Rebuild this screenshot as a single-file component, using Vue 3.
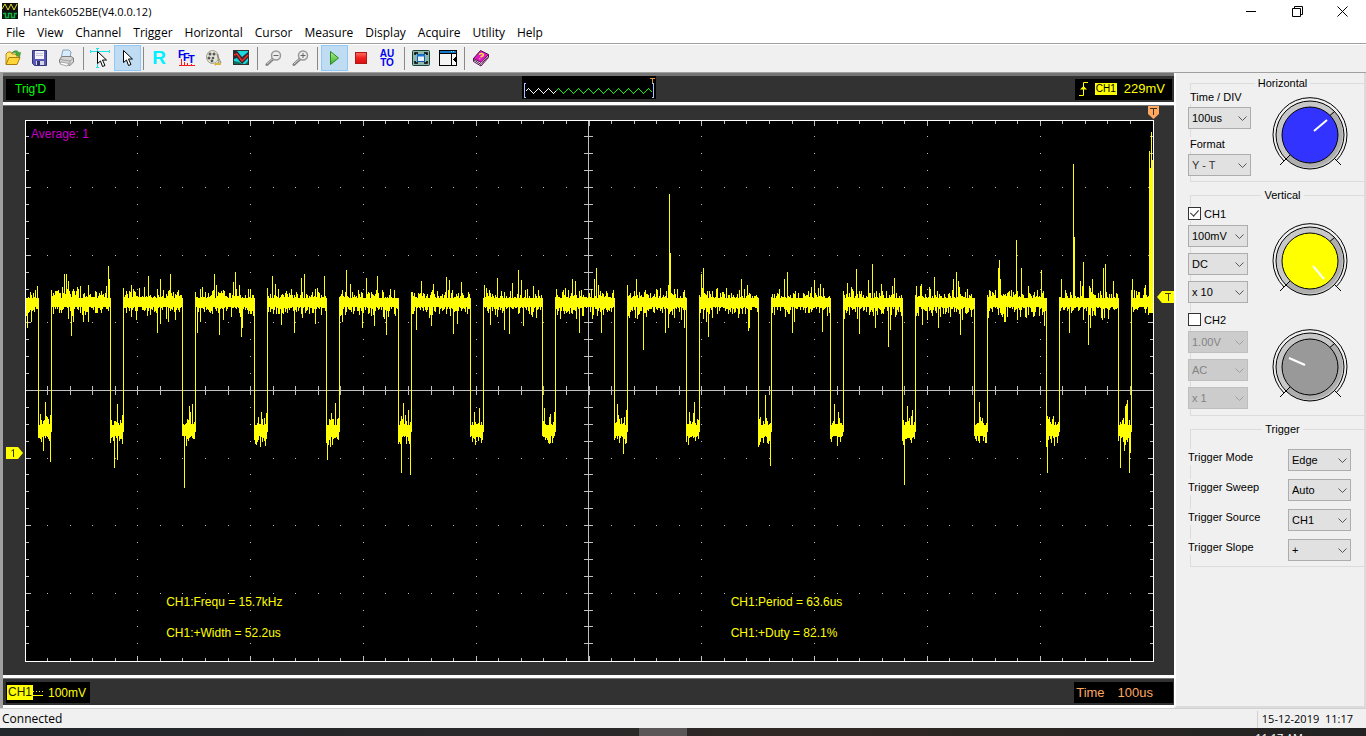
<script setup>
import { ref } from 'vue'

const menus = ['File', 'View', 'Channel', 'Trigger', 'Horizontal', 'Cursor', 'Measure', 'Display', 'Acquire', 'Utility', 'Help']

const readings = ['CH1:Frequ = 15.7kHz', 'CH1:Period = 63.6us', 'CH1:+Width = 52.2us', 'CH1:+Duty = 82.1%']

const channels = ref([
  { name: 'CH1', on: true, settings: ['100mV', 'DC', 'x 10'], labels: ['Volts', 'Coupling', 'Probe'], color: '#ffff00', hand: 'M41 41L52 54' },
  { name: 'CH2', on: false, settings: ['1.00V', 'AC', 'x 1'], labels: ['Volts', 'Coupling', 'Probe'], color: '#999999', hand: 'M17 27L33 34' }
])

const triggers = [
  ['Trigger Mode', 'Edge'],
  ['Trigger Sweep', 'Auto'],
  ['Trigger Source', 'CH1'],
  ['Trigger Slope', '+']
]

const W = 1129
const H = 542

function buildGrid() {
  let dots = ''
  let ticks = ''
  for (let i = 1; i < 50; i++) {
    const x = Math.floor(i * 22.56)
    const len = i % 5 === 0 ? 5 : 3
    ticks += `M${x + 0.5} 1v${len}M${x + 0.5} ${H - 1}v${-len}M${x + 0.5} 266v9`
    for (let r = 1; r < 8; r++) {
      if (r !== 4) dots += `M${x} ${Math.floor(r * 67.6) + 0.5}h1`
    }
  }
  for (let j = 1; j < 32; j++) {
    const y = Math.floor(j * 16.9)
    const len = j % 4 === 0 ? 5 : 3
    ticks += `M1 ${y + 0.5}h${len}M${W - 1} ${y + 0.5}h${-len}M559 ${y + 0.5}h9`
    for (let c = 1; c < 10; c++) {
      if (c !== 5) dots += `M${Math.floor(c * 112.8)} ${y + 0.5}h1`
    }
  }
  return { dots, ticks }
}

const peaksUp = {
  64: 274, 66: 274, 68: 281, 88: 285, 108: 266, 109: 279, 131: 285, 148: 276, 160: 279, 170: 274, 178: 290,
  214: 274, 216: 285, 233: 282, 235: 272, 239: 285, 272: 276, 275: 284, 301: 278, 304: 274, 324: 276, 346: 270,
  350: 284, 366: 278, 377: 276, 403: 403, 421: 281, 433: 284, 446: 277, 449: 280, 461: 282, 484: 285, 497: 278,
  512: 283, 518: 270, 521: 280, 533: 286, 556: 289, 572: 279, 575: 281, 594: 279, 596: 268, 598: 285, 613: 291,
  627: 285, 636: 279, 660: 288, 668: 285, 669: 194, 670: 253, 684: 290, 701: 274, 702: 288, 703: 268, 741: 279,
  747: 285, 784: 279, 787: 272, 814: 280, 820: 284, 847: 283, 856: 269, 868: 280, 872: 264, 881: 284, 894: 278,
  921: 284, 934: 277, 953: 279, 956: 272, 958: 281, 998: 268, 999: 260, 1000: 279, 1016: 240, 1021: 268,
  1041: 270, 1061: 279, 1073: 164, 1074: 237, 1080: 281, 1083: 262, 1092: 279, 1103: 268, 1105: 264, 1113: 281,
  1132: 279, 1145: 285, 1149: 151, 1150: 168, 1151: 132, 1152: 160,
  40: 414, 45: 402, 46: 417, 117: 404, 189: 406, 190: 412, 192: 404, 261: 412, 331: 413, 335: 403, 408: 410,
  474: 412, 479: 408, 544: 408, 550: 414, 554: 412, 617: 404, 626: 410, 689: 412, 694: 402, 760: 417, 765: 395,
  834: 404, 838: 412, 907: 406, 912: 410, 979: 402, 1049: 417, 1125: 406, 1126: 404, 1127: 400
}

const peaksDown = {
  27: 328, 31: 322, 71: 336, 73: 322, 83: 322, 88: 322, 136: 320, 157: 333, 160: 324, 166: 319, 168: 322, 175: 320,
  197: 333, 200: 322, 219: 335, 241: 337, 242: 328, 281: 325, 294: 333, 315: 324, 342: 322, 362: 328, 374: 326,
  386: 335, 416: 330, 431: 326, 453: 334, 457: 324, 490: 325, 504: 330, 509: 334, 523: 326, 560: 319, 579: 333,
  592: 319, 601: 333, 637: 319, 643: 350, 665: 333, 668: 328, 681: 320, 684: 328, 706: 322, 708: 337, 748: 331,
  749: 328, 792: 333, 794: 322, 822: 332, 859: 334, 875: 328, 888: 347, 890: 330, 922: 325, 938: 328, 960: 335,
  962: 320, 1004: 322, 1005: 322, 1017: 320, 1044: 326, 1069: 333, 1088: 345, 1090: 328, 1102: 320,
  43: 451, 50: 462, 114: 468, 117: 460, 184: 488, 256: 445, 265: 442, 327: 460, 401: 473, 410: 475, 481: 443,
  552: 443, 623: 454, 688: 445, 758: 447, 770: 466, 837: 446, 904: 485, 979: 443, 1046: 447, 1047: 473,
  1120: 468, 1124: 451, 1129: 473, 1130: 453, 1131: 477
}

function buildTrace() {
  let seed = 6052
  const rnd = () => {
    seed = (seed * 16807) % 2147483647
    return seed / 2147483647
  }
  let d = ''
  for (let x = 26; x < 1153; x++) {
    const phase = (x - 38 + 72) % 72
    const low = phase < 13 && x < 1140
    const a = Math.floor(rnd() * rnd() * 14)
    const b = Math.floor(rnd() * rnd() * 14)
    let top = low ? 425 - a : 298 - a
    let bottom = low ? 436 + b : 307 + b
    if (peaksUp[x]) top = Math.min(top, peaksUp[x])
    if (peaksDown[x]) bottom = Math.max(bottom, peaksDown[x])
    if (phase === 0) top = 298
    if (phase === 13) bottom = 432
    if (x >= 1149) bottom = 313
    d += `M${x - 25 + 0.5} ${top - 120}V${bottom - 120}`
  }
  return d
}

function buildPreview(from, to) {
  let d = ''
  for (let x = from; x <= to; x++) {
    const t = (x + 4) % 10
    const y = t < 5 ? 12 + t : 22 - t
    d += `${d ? 'L' : 'M'}${x + 0.5} ${y + 0.5}`
  }
  return d
}

const grid = buildGrid()
const trace = buildTrace()
const previewHead = buildPreview(3, 33)
const previewTail = buildPreview(33, 130)
</script>

<template>
  <div class="window">
    <header class="titlebar">
      <svg class="logo" width="16" height="16" viewBox="0 0 16 16">
        <rect width="16" height="16" fill="#101010" />
        <path d="M0 6L3 1L6 7L9 1L12 7L15 1" fill="none" stroke="#e8e020" />
        <path d="M1 10.500H3.500V14.500H6.500V10.500H9.500V14.500H12.500V10.500H15" fill="none" stroke="#10b040" stroke-width="1.500" />
      </svg>
      <h1>Hantek6052BE(V4.0.0.12)</h1>
      <div class="controls">
        <button aria-label="Minimize"><svg width="11" height="11"><path d="M0 5.500H10" /></svg></button>
        <button aria-label="Restore"><svg width="11" height="11"><path d="M.5 2.500H8.500V10.500H.5ZM2.500 2.500V.5H10.500V8.500H8.500" /></svg></button>
        <button aria-label="Close"><svg width="11" height="11"><path d="M.5 .5L10.500 10.500M10.500 .5L.5 10.500" /></svg></button>
      </div>
    </header>

    <nav class="menubar">
      <button v-for="m in menus" :key="m">{{ m }}</button>
    </nav>

    <div class="toolbar">
      <button aria-label="Open">
        <svg width="18" height="18" viewBox="0 0 18 18">
          <path d="M2 15V5L4 3H7L8 5H13V8" fill="#ffe36a" stroke="#b98a10" />
          <path d="M2 15.500L5 8.500H16L13 15.500Z" fill="#ffd63a" stroke="#a87a08" />
          <path d="M8 4C10 1 14 1 15 4L16.500 3.500L15.500 8L11.500 5.500L13 5C12 3 10 3 8 4Z" fill="#48b038" stroke="#28781c" stroke-width=".6" />
        </svg>
      </button>
      <button aria-label="Save">
        <svg width="18" height="18" viewBox="0 0 18 18">
          <path d="M1.500 1.500H15.500V16.500H3.500L1.500 14.500Z" fill="#5a5ab4" stroke="#34347c" />
          <rect x="4" y="2" width="9" height="8" fill="#f4f4fa" />
          <path d="M5 4.500H12M5 6.500H12" stroke="#c4c4d8" />
          <rect x="5" y="12" width="8" height="4" fill="#d8d8e4" />
          <rect x="6" y="12" width="3" height="4" fill="#34347c" />
        </svg>
      </button>
      <button aria-label="Print">
        <svg width="18" height="18" viewBox="0 0 18 18">
          <path d="M3 9L5 1H11L13 3L12 9Z" fill="#d8ecff" stroke="#88a0b8" />
          <path d="M1.500 10.500L4 7.500H13L15.500 9V13L12 16.500L1.500 13.500Z" fill="#d4d4d4" stroke="#808080" />
          <path d="M2 10.500L12 12L15 9.500M12 12V16" fill="none" stroke="#a0a0a0" />
          <path d="M3 13L11 14.500L9 17L2 15Z" fill="#fff" stroke="#888" stroke-width=".7" />
        </svg>
      </button>
      <i class="sep"></i>
      <button aria-label="Measure cursor">
        <svg width="20" height="20" viewBox="0 0 20 20">
          <path d="M.5 2V5M19.500 2V5M1 3.500H19M7.500 0V19M6 .5H9M6 19.500H9" fill="none" stroke="#20e0e8" />
          <path d="M7.500 3.500V15.500L10.500 13L12.500 18.500L15 17.500L12.500 12H16.500Z" fill="#fff" stroke="#000" />
        </svg>
      </button>
      <button class="active" aria-label="Pointer">
        <svg width="18" height="18" viewBox="0 0 18 18">
          <path d="M5.500 1.500V13.500L8.500 11L10.500 16.500L13 15.500L10.500 10H14.500Z" fill="#fff" stroke="#000" />
        </svg>
      </button>
      <i class="sep"></i>
      <button class="letter-r">R</button>
      <button aria-label="FFT">
        <svg class="fft" width="18" height="18" viewBox="0 0 18 18">
          <path d="M1 16.500H17M3.500 10V17M6.500 13V17M9.500 14V17M13.500 15V17" stroke="#ff1818" />
          <text x="0" y="9">F</text><text x="5" y="12">F</text><text x="10" y="14">T</text>
        </svg>
      </button>
      <button aria-label="Record">
        <svg width="18" height="18" viewBox="0 0 18 18">
          <ellipse cx="7.500" cy="8" rx="6" ry="6.500" fill="#e4e4d8" stroke="#a0a090" />
          <g fill="#585858"><circle cx="5" cy="5" r="1.500" /><circle cx="9" cy="5" r="1.500" /><circle cx="4" cy="9" r="1.500" /><circle cx="8" cy="9" r="1.300" /><circle cx="7" cy="12" r="1.400" /></g>
          <path d="M12 5L16 14L10 16L14 13Z" fill="#ddd5a0" stroke="#909080" />
          <path d="M10 14H16V16H9Z" fill="#d8b840" />
        </svg>
      </button>
      <button aria-label="Pass fail">
        <svg width="18" height="18" viewBox="0 0 18 18">
          <rect x="1.500" y="1.500" width="15" height="14" fill="#18d8e0" stroke="#303030" />
          <path d="M2 2L5 2L10 8L16 3V9L10 15L5 9L2 10Z" fill="#302830" />
          <path d="M2 6L5 5L10 12L16 6" fill="none" stroke="#f02828" stroke-width="1.500" />
          <path d="M2 15V12L7 13L10 15ZM16 15V12L13 15Z" fill="#107058" />
        </svg>
      </button>
      <i class="sep"></i>
      <button aria-label="Zoom out">
        <svg width="18" height="18" viewBox="0 0 18 18">
          <path d="M2 15.500L8 10" stroke="#808080" stroke-width="3" stroke-linecap="round" /><path d="M2 15L8 9.500" stroke="#d0d0d0" />
          <circle cx="11" cy="6.500" r="4.500" fill="#ececec" stroke="#989898" stroke-width="1.500" /><path d="M8.500 6.500H13.500" stroke="#666" />
        </svg>
      </button>
      <button aria-label="Zoom in">
        <svg width="18" height="18" viewBox="0 0 18 18">
          <path d="M2 15.500L8 10" stroke="#808080" stroke-width="3" stroke-linecap="round" /><path d="M2 15L8 9.500" stroke="#d0d0d0" />
          <circle cx="11" cy="6.500" r="4.500" fill="#ececec" stroke="#989898" stroke-width="1.500" /><path d="M8.500 6.500H13.500M11 4V9" stroke="#666" />
        </svg>
      </button>
      <i class="sep"></i>
      <button class="active" aria-label="Run">
        <svg width="18" height="18" viewBox="0 0 18 18">
          <defs><linearGradient id="run" x2="0" y2="1"><stop stop-color="#b0f090" /><stop offset="1" stop-color="#38b028" /></linearGradient></defs>
          <path d="M5.500 2.500V15.500L13.500 9Z" fill="url(#run)" stroke="#288820" />
        </svg>
      </button>
      <button aria-label="Stop">
        <svg width="18" height="18" viewBox="0 0 18 18">
          <defs><linearGradient id="halt" x2="0" y2="1"><stop stop-color="#ff7060" /><stop offset=".5" stop-color="#f02020" /><stop offset="1" stop-color="#d81010" /></linearGradient></defs>
          <rect x="3.500" y="3.500" width="11" height="11" fill="url(#halt)" stroke="#b01818" />
        </svg>
      </button>
      <button class="auto"><span>AU</span><span>TO</span></button>
      <i class="sep"></i>
      <button aria-label="Full screen">
        <svg width="18" height="18" viewBox="0 0 18 18">
          <rect x=".5" y="1.500" width="17" height="15" rx="1" fill="#8fb8ac" stroke="#184038" />
          <path d="M3 6V4H6M12 4H15V6M15 12V14H12M6 14H3V12" fill="none" stroke="#000" stroke-width="1.500" />
          <rect x="5.500" y="5.500" width="7" height="7" fill="#e8f4ff" stroke="#1858a8" /><path d="M5 6.500H13" stroke="#1878d8" stroke-width="2" />
        </svg>
      </button>
      <button aria-label="Side panel">
        <svg width="18" height="18" viewBox="0 0 18 18" shape-rendering="crispEdges">
          <rect x=".5" y="1.500" width="17" height="15" fill="#f4f4f4" stroke="#000" />
          <path d="M1 3H17" stroke="#1878c8" stroke-width="2" /><path d="M12 2.500H16" stroke="#80e0ff" stroke-dasharray="1 1" />
          <path d="M0 4.500H18M12.500 5V16" stroke="#000" /><path d="M17 7V14L14 10.500Z" fill="#000" />
        </svg>
      </button>
      <i class="sep"></i>
      <button aria-label="Help book">
        <svg width="18" height="18" viewBox="0 0 18 18">
          <path d="M1.500 9V12.500L9 17L16.500 8.500V5.500" fill="#fff" stroke="#501048" />
          <path d="M1.500 9.500L8.500 1.500L16.500 5.500L9 13.500Z" fill="#e018c8" stroke="#501048" />
          <path d="M2 11L9 15.500L16 7.500" fill="none" stroke="#501048" />
          <path d="M7 5.500C10 3.500 13 5.500 10.500 7L8.500 8M7.500 9.500L8 10" fill="none" stroke="#ffe040" stroke-width="1.500" />
        </svg>
      </button>
    </div>

    <main class="work">
      <section class="scope">
        <div class="strip">
          <span class="box trigd">Trig'D</span>
          <svg class="preview" width="134" height="23" viewBox="0 0 134 23">
            <rect width="134" height="23" fill="#000" />
            <g fill="none" shape-rendering="crispEdges">
              <path :d="previewHead" stroke="#fff" /><path :d="previewTail" stroke="#00ff00" />
              <path d="M4 7.500H2.500V21.500H4M130 7.500H131.500V21.500H130" stroke="#a8c0ff" />
              <path d="M128 2.500H133M130.500 2V7" stroke="#e09040" />
            </g>
          </svg>
          <span class="box level">
            <svg width="9" height="14" viewBox="0 0 9 14"><path d="M0 13.500H4.500V.5H9" fill="none" stroke="#ff0" /><path d="M1 7.500L4.500 4L8 7.500Z" fill="#ff0" /></svg>
            <b>CH1</b><span>229mV</span>
          </span>
        </div>

        <div class="stage">
          <div class="plot">
            <svg class="screen" viewBox="0 0 1129 542" preserveAspectRatio="none" shape-rendering="crispEdges">
              <rect x=".5" y=".5" width="1128" height="541" fill="#000" stroke="#fff" />
              <path d="M1 270.500H1128M563.500 1V541" stroke="#c0c0c0" />
              <path :d="grid.ticks" stroke="#c0c0c0" />
              <path :d="grid.dots" stroke="#c0c0c0" />
              <path :d="trace" stroke="#ffff00" />
            </svg>
            <span class="average">Average: 1</span>
            <div class="readings"><span v-for="r in readings" :key="r">{{ r }}</span></div>
            <svg class="mark mark-time" width="11" height="13" viewBox="0 0 11 13"><path d="M0 0H11V8L5.500 13L0 8Z" fill="#ffa860" /><path d="M2 2.500H9M5.500 2V9" stroke="#403020" /></svg>
            <svg class="mark mark-level" width="17" height="12" viewBox="0 0 17 12"><path d="M17 0H5L0 6L5 12H17Z" fill="#ff0" /><path d="M8 2.500H14M11.500 2V10" stroke="#403c00" /></svg>
            <svg class="mark mark-zero" width="17" height="12" viewBox="0 0 17 12"><path d="M0 0H12L17 6L12 12H0Z" fill="#ff0" /><path d="M5.500 4L7.500 2.500V10" fill="none" stroke="#303000" /></svg>
          </div>
        </div>

        <div class="strip">
          <span class="box volts"><b>CH1</b>
            <svg width="10" height="6" viewBox="0 0 10 6" shape-rendering="crispEdges"><path d="M0 1.500H10" stroke="#ff0" stroke-dasharray="1 2" /><path d="M0 5.500H10" stroke="#ff0" /></svg>
            <span>100mV</span>
          </span>
          <span class="box time"><span>Time</span><span>100us</span></span>
        </div>
      </section>

      <aside class="panel">
        <fieldset>
          <legend>Horizontal</legend>
          <div class="body split middle">
            <div class="stack base">
              <label for="timediv">Time / DIV</label>
              <div class="pick"><select id="timediv"><option>100us</option></select><svg width="9" height="6"><path d="M.5 .5L4.500 4.500L8.500 .5" /></svg></div>
              <label for="format" class="second">Format</label>
              <div class="pick"><select id="format" class="soft"><option>Y - T</option></select><svg width="9" height="6"><path d="M.5 .5L4.500 4.500L8.500 .5" /></svg></div>
            </div>
            <svg class="knob" width="76" height="72" viewBox="0 0 76 72">
              <circle cx="38" cy="36" r="34" fill="#c8c8c8" />
              <path d="M62 12A34 34 0 0 1 14 60Z" fill="#aeaeae" />
              <g fill="none" stroke="#000">
                <path d="M12 62A37 37 0 1 1 64 62" /><circle cx="38" cy="36" r="34" />
                <path d="M56 18L62 13M20 54L8 66M62 59L69 66" />
              </g>
              <circle cx="38" cy="36" r="28" fill="#3333ff" stroke="#000" />
              <path d="M42 32L55 21" stroke="#fff" stroke-width="2" />
            </svg>
          </div>
        </fieldset>

        <fieldset>
          <legend>Vertical</legend>
          <div class="body channels">
            <div v-for="c in channels" :key="c.name" class="channel">
              <label class="tick"><input v-model="c.on" type="checkbox" />{{ c.name }}</label>
              <div class="split">
                <div class="stack">
                  <div v-for="(s, i) in c.settings" :key="s" class="pick narrow">
                    <select :disabled="!c.on" :aria-label="c.name + ' ' + c.labels[i]"><option>{{ s }}</option></select>
                    <svg width="9" height="6"><path d="M.5 .5L4.500 4.500L8.500 .5" /></svg>
                  </div>
                </div>
                <svg class="knob" width="76" height="72" viewBox="0 0 76 72">
                  <circle cx="38" cy="36" r="34" fill="#c8c8c8" />
                  <path d="M62 12A34 34 0 0 1 14 60Z" fill="#aeaeae" />
                  <g fill="none" stroke="#000">
                    <path d="M12 62A37 37 0 1 1 64 62" /><circle cx="38" cy="36" r="34" />
                    <path d="M56 18L62 13M20 54L8 66M62 59L69 66" />
                  </g>
                  <circle cx="38" cy="36" r="28" :fill="c.color" stroke="#000" />
                  <path :d="c.hand" stroke="#fff" stroke-width="2" />
                </svg>
              </div>
            </div>
          </div>
        </fieldset>

        <fieldset>
          <legend>Trigger</legend>
          <div class="body triggers">
            <div v-for="([name, value], i) in triggers" :key="name" class="row">
              <label :for="'trigger' + i">{{ name }}</label>
              <div class="pick"><select :id="'trigger' + i"><option>{{ value }}</option></select><svg width="9" height="6"><path d="M.5 .5L4.500 4.500L8.500 .5" /></svg></div>
            </div>
          </div>
        </fieldset>
      </aside>
    </main>

    <footer class="status"><span>Connected</span><time>15-12-2019&nbsp; 11:17</time></footer>
    <div class="taskbar"><i></i><span>11:17 AM</span></div>
  </div>
</template>

<style>
html, body { margin: 0; }
</style>

<style scoped>
.window {
  display: flex;
  flex-direction: column;
  height: 100vh;
  min-height: 700px;
  overflow: hidden;
  background: #f0f0f0;
  color: #000;
  font: 12px/16px "Open Sans", "Noto Sans", sans-serif;
}
*, *::before { box-sizing: border-box; }
button { padding: 0; border: 0; background: none; font: inherit; color: inherit; }
svg { display: block; flex: none; }

.titlebar { display: flex; align-items: center; height: 22px; flex: none; padding-left: 2px; background: #fff; }
h1 { margin: 0 auto 0 5px; padding-top: 2px; font-size: 11px; font-weight: 400; }
.controls { display: flex; }
.controls button { display: grid; place-items: center; width: 46px; height: 21px; }
.controls button:last-child { padding-right: 2px; }
.controls path { fill: none; stroke: #000; }
.menubar { display: flex; gap: 12px; height: 21px; flex: none; padding-left: 6px; background: #fff; }

.toolbar { display: flex; flex: none; height: 29px; padding-bottom: 1px; border-top: 1px solid #a0a0a0; background: #f0f0f0; box-shadow: inset 0 1px #fff; }
.toolbar button { display: grid; place-items: center; width: 27px; height: 26px; margin-top: 1px; padding-right: 1px; }
.toolbar .active { border: 1px solid #90c8f6; background: #c0dcf3; }
.sep { width: 6px; height: 23px; margin-top: 3px; background: linear-gradient(#888, #888) 2px 0 / 1px 100% no-repeat; }
.toolbar .letter-r { padding-right: 3px; color: #00f0ff; font: bold 19px/22px "Liberation Sans", Arial, sans-serif; }
.toolbar .auto { align-content: center; padding-right: 3px; color: #0000f0; font: bold 10px/9px "Liberation Sans", Arial, sans-serif; }
.fft text { fill: #0000f0; font: bold 11px "Liberation Sans", Arial, sans-serif; }

.work { display: flex; flex: 1; min-height: 0; border-top: 1px solid #a0a0a0; box-shadow: inset 0 1px #696969; }
.scope {
  display: flex;
  flex-direction: column;
  flex: 1;
  min-width: 0;
  border-left: 3px solid #a0a0a0;
  font: 12px/16px "Liberation Sans", Arial, sans-serif;
}
.strip {
  position: relative;
  display: flex;
  justify-content: space-between;
  align-items: center;
  flex: none;
  height: 32px;
  padding: 0 2px 0 3px;
  border-top: 3px solid #747474;
  border-bottom: 3px solid #fff;
  background: #323232;
}
.strip:last-child { height: 30px; padding-top: 1px; border-top-width: 1px; }
.box { display: flex; align-items: center; height: 21px; background: #000; }
.trigd { padding: 0 9px; color: #00ff00; }
.preview { position: absolute; left: 519px; top: 0; }
.level { gap: 7px; padding: 0 7px 0 4px; color: #ff0; font-size: 13px; }
.level b { padding: 0 1px; background: #ff0; color: #000; font: 10px/12px "Liberation Sans", Arial, sans-serif; }
.volts { padding: 0 4px 0 1px; color: #ff0; }
.volts b { padding: 0 1px; background: #ff0; color: #202000; font: 12px/15px "Liberation Sans", Arial, sans-serif; }
.volts svg { margin-right: 5px; }
.time { gap: 13px; padding: 0 20px 0 2px; color: #ffa860; font-size: 13px; }
.strip .time { margin-right: -1px; }

.stage { display: flex; flex: 1; min-height: 0; padding: 14px 20px 13px 22px; border-top: 1px solid #747474; border-bottom: 3px solid #fff; background: #323232; }
.plot { position: relative; flex: 1; min-width: 0; }
.screen { width: 100%; height: 100%; }
.average { position: absolute; left: 6px; top: 6px; color: #c800c8; }
.readings {
  position: absolute;
  left: 12.5%;
  right: 0;
  bottom: 21px;
  display: grid;
  grid-template-columns: 4fr 3fr;
  row-gap: 15px;
  color: #ff0;
}
.mark { position: absolute; }
.mark-time { right: -5px; top: -14px; }
.mark-level { right: -20px; top: 31.6%; }
.mark-zero { left: -19px; top: 60.3%; }

.panel {
  width: 192px;
  flex: none;
  padding-top: 3px;
  border-left: 2px solid #fff;
  border-right: 2px solid #dcdcdc;
  border-bottom: 2px solid #dcdcdc;
  background: #f0f0f0;
  background-clip: padding-box;
  font: 11px/14px "Liberation Sans", Arial, sans-serif;
}
fieldset { min-width: 0; margin: 0 0 6px 14px; padding: 0 0 5px 10px; border: 1px solid #dcdcdc; border-right: 0; }
legend { margin: 0 auto; padding: 0 3px; }
.body { margin-left: -13px; }
.split { display: flex; justify-content: space-between; align-items: flex-start; padding-right: 16px; }
.stack { display: flex; flex-direction: column; gap: 6px; }
.base { gap: 3px; }
.base label { padding-left: 2px; background: #f0f0f0; }
.base .second { margin-top: 5px; }
.knob { overflow: visible; }
.middle .knob { margin-top: 9px; }
.pick { position: relative; width: 63px; height: 22px; }
.narrow { width: 60px; }
.pick svg { position: absolute; right: 4px; top: 9px; pointer-events: none; }
.pick path { fill: none; stroke: #555; }
select {
  appearance: none;
  display: block;
  width: 100%;
  height: 22px;
  margin: 0;
  padding: 0 0 0 3px;
  border: 1px solid #adadad;
  border-radius: 0;
  background: #e1e1e1;
  color: #000;
  font: inherit;
}
.soft { color: #333; }
select:disabled { border-color: #bfbfbf; background: #ccc; color: #838383; opacity: 1; }
select:disabled + svg path { stroke: #a0a0a0; }
.channels { display: flex; flex-direction: column; gap: 9px; padding: 4px 0 1px; }
.tick { display: flex; align-items: center; gap: 3px; height: 15px; margin-bottom: 4px; background: #f0f0f0; width: 60px; }
.tick input { appearance: none; position: relative; width: 13px; height: 13px; margin: 0; border: 1px solid #333; background: #fff; }
.tick input:checked::before { content: ""; position: absolute; left: 3px; top: 0; width: 5px; height: 8px; border: solid #333; border-width: 0 1px 1px 0; transform: rotate(42deg); }
.triggers { display: flex; flex-direction: column; gap: 8px; padding-top: 13px; }
.row { display: flex; justify-content: space-between; align-items: flex-start; padding-right: 13px; }
.row label { background: #f0f0f0; line-height: 16px; }

.status { display: flex; justify-content: space-between; flex: none; height: 20px; padding: 2px 13px 0 2px; border-top: 1px solid #d0d0d0; }
.status time { padding-left: 4px; border-left: 1px solid #d0d0d0; font-size: 11px; }
.taskbar { position: relative; flex: none; height: 8px; overflow: hidden; background: linear-gradient(90deg, #22272b, #2b2829 45%, #302824 60%, #222); color: #fff; }
.taskbar i { position: absolute; left: 639px; width: 48px; height: 8px; background: #5a5658; }
.taskbar span { position: absolute; right: 63px; top: 2px; font-size: 11px; }
</style>
